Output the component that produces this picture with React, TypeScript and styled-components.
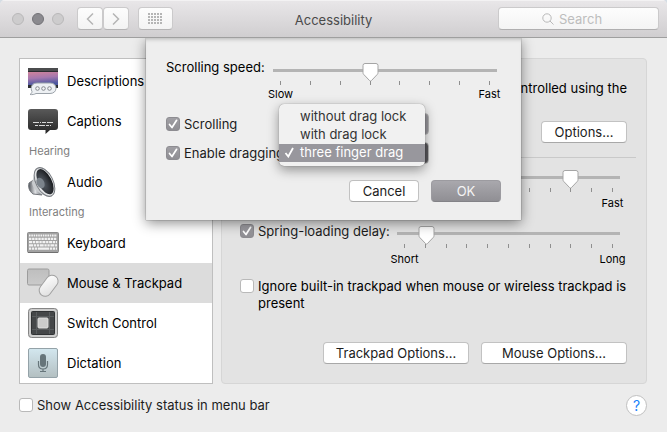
import React from "react";
import styled, { createGlobalStyle, css } from "styled-components";

const GlobalStyle = createGlobalStyle`
  *, *::before, *::after { box-sizing: border-box; }
  body { margin: 0; background: #d5dde4; }
  body, button, input, select { font-family: Inter, "Open Sans", sans-serif; font-size: 13px; color: #1c1c1c; }
  button { cursor: default; }
`;

const svgUrl = (body: string) => `url("data:image/svg+xml,${encodeURIComponent(body)}")`;

const thumbImage = svgUrl(
  `<svg xmlns="http://www.w3.org/2000/svg" width="17" height="20"><path d="M3 1.5h11a2 2 0 0 1 2 2v7.2c0 .7-.3 1.200-.7 1.700L9.400 18.600a1.200 1.200 0 0 1-1.800 0L1.700 12.400C1.300 11.900 1 11.400 1 10.700V3.500a2 2 0 0 1 2-2z" fill="#fff" stroke="#a5a5a5"/></svg>`
);
const tickImage = svgUrl(
  `<svg xmlns="http://www.w3.org/2000/svg" width="14" height="14"><path d="M3.500 7.500l2.500 3L10.600 3.300" fill="none" stroke="#fff" stroke-width="1.700" stroke-linecap="round" stroke-linejoin="round"/></svg>`
);

const Window = styled.div`
  min-height: 100vh;
  display: flex;
  flex-direction: column;
  background: #ececec;
  border-radius: 5px 5px 0 0;
  overflow: hidden;
`;

const TitleBar = styled.header`
  height: 38px;
  flex: none;
  display: grid;
  grid-template-columns: 1fr auto 1fr;
  align-items: center;
  padding: 0 8px;
  background: linear-gradient(#e9e7e9, #d0ced0);
  border-bottom: 1px solid #9f9f9f;
  box-shadow: inset 0 1px #f3f2f3;
`;

const TitleGroup = styled.div`
  display: flex;
  align-items: center;
  gap: 9px;
  padding-left: 4px;
`;

const Lights = styled.div`
  display: flex;
  gap: 8px;
  margin-right: 4px;
`;

const Light = styled.button<{ $active?: boolean }>`
  width: 12px;
  height: 12px;
  padding: 0;
  border-radius: 50%;
  border: 1px solid ${(p) => (p.$active ? "#737277" : "#b9b8b9")};
  background: ${(p) => (p.$active ? "#8b8a8f" : "#cdcccd")};
`;

const NavPair = styled.div`
  display: flex;
`;

const ToolButton = styled.button<{ $wide?: boolean }>`
  width: ${(p) => (p.$wide ? 35 : 26)}px;
  height: 23px;
  padding: 0;
  display: grid;
  place-items: center;
  border: 1px solid #cbcacb;
  border-bottom-color: #b5b4b5;
  border-radius: 4px;
  background: linear-gradient(#fdfdfd, #f3f3f3);
  color: #b5b5b5;
`;

const Title = styled.h1`
  margin: 2px 0 0;
  font-size: 13px;
  line-height: 18px;
  font-weight: 400;
  color: #4a4a4a;
`;

const SearchBox = styled.label`
  justify-self: end;
  width: 161px;
  height: 23px;
  display: flex;
  align-items: center;
  justify-content: center;
  gap: 5px;
  border: 1px solid #cbcacb;
  border-bottom-color: #b0afb0;
  border-radius: 4px;
  background: linear-gradient(#fdfdfd, #f4f4f4);
  color: #b9b9b9;
`;

const SearchInput = styled.input`
  width: 56px;
  padding: 1px 0 0;
  border: 0;
  outline: 0;
  background: transparent;
  &::placeholder { color: #bdbdbd; }
`;

const Body = styled.main`
  position: relative;
  flex: 1;
  display: flex;
  flex-direction: column;
  padding: 20px 20px 16px 19px;
  overflow: hidden;
`;

const Columns = styled.div`
  display: flex;
  gap: 8px;
`;

const Sidebar = styled.nav`
  width: 194px;
  flex: none;
  padding-top: 2px;
  background: #fff;
  border: 1px solid #bfbfbf;
`;

const GroupTitle = styled.h2`
  margin: 0;
  padding-left: 9px;
  font-size: 11px;
  line-height: 21px;
  font-weight: 400;
  color: #808080;
`;

const Item = styled.a<{ $selected?: boolean }>`
  height: 40px;
  display: flex;
  align-items: center;
  gap: 9px;
  padding-left: 8px;
  color: #000;
  text-decoration: none;
  background: ${(p) => (p.$selected ? "#dcdcdc" : "transparent")};
`;

const ItemIcon = styled.span`
  width: 30px;
  flex: none;
  display: flex;
  justify-content: center;
  svg { flex: none; }
`;

const Panel = styled.section`
  flex: 1;
  min-width: 0;
  display: flex;
  flex-direction: column;
  padding: 21px 19px 19px 18px;
  background: #e3e3e3;
  border: 1px solid #d6d6d6;
  border-radius: 4px;
`;

const Intro = styled.p`
  margin: 0 0 7px;
  align-self: flex-end;
  line-height: 17px;
  white-space: nowrap;
  color: #000;
`;

const PushButton = styled.button<{ $primary?: boolean; $size: "small" | "medium" | "large" }>`
  width: ${(p) => ({ small: 70, medium: 86, large: 146 })[p.$size]}px;
  height: 22px;
  padding: 0;
  line-height: 18px;
  border: 1px solid #c2c2c2;
  border-bottom-color: #a8a8a8;
  border-radius: 4px;
  background: #fff;
  white-space: nowrap;
  ${(p) =>
    p.$primary &&
    css`
      color: #f4f4f4;
      border-color: #9c9ba0;
      border-bottom-color: #838287;
      background: linear-gradient(#a9a8ad, #908f94);
    `}
`;

const ButtonRow = styled.div`
  display: flex;
  justify-content: flex-end;
  gap: 12px;
`;

const PanelFooter = styled(ButtonRow)`
  margin-top: auto;
`;

const Divider = styled.hr`
  width: auto;
  margin: 14px -9px 9px;
  border: 0;
  border-top: 1px solid #c9c9c9;
`;

const SliderRows = styled.div`
  display: grid;
  grid-template-columns: 148px 1fr;
  gap: 13px 9px;
  padding-right: 7px;
  margin-bottom: 12px;
`;

const CheckLabel = styled.label`
  display: flex;
  align-items: flex-start;
  gap: 4px;
  line-height: 17px;
  white-space: nowrap;
`;

const WrapLabel = styled(CheckLabel)`
  white-space: normal;
  color: #000;
`;

const Check = styled.input`
  appearance: none;
  flex: none;
  width: 14px;
  height: 14px;
  margin: 1px 0;
  border: 1px solid #b9b9b9;
  border-radius: 3px;
  background: #fff;
  &:checked {
    border-color: #8d8c91;
    background: ${tickImage} center / 14px 14px no-repeat, linear-gradient(#a09fa4, #8f8e93);
  }
`;

const SliderBox = styled.div<{ $roomy?: boolean }>`
  flex: 1;
  min-width: 0;
  padding-top: ${(p) => (p.$roomy ? 2 : 0)}px;
`;

const Range = styled.input`
  appearance: none;
  display: block;
  width: 100%;
  height: 19px;
  margin: 0;
  background: transparent;
  &::-webkit-slider-runnable-track {
    height: 19px;
    background: linear-gradient(#b4b4b4, #b4b4b4) 0 7px / 100% 3px no-repeat;
  }
  &::-webkit-slider-thumb {
    appearance: none;
    width: 17px;
    height: 20px;
    background: ${thumbImage} no-repeat;
  }
`;

const Ticks = styled.div`
  display: flex;
  justify-content: space-between;
  padding: 0 7px;
`;

const Tick = styled.span`
  width: 1px;
  height: 4px;
  background: #8f8f8f;
`;

const Ends = styled.div<{ $roomy?: boolean }>`
  display: flex;
  justify-content: space-between;
  padding: ${(p) => (p.$roomy ? 4 : 2)}px 7px 0;
`;

const End = styled.span`
  width: 1px;
  display: flex;
  justify-content: center;
  white-space: nowrap;
  font-size: 11px;
  line-height: 14px;
  color: #000;
`;

const Footer = styled.footer`
  display: flex;
  align-items: center;
  justify-content: space-between;
  padding-top: 11px;
`;

const HelpButton = styled.button`
  width: 21px;
  height: 21px;
  padding: 0;
  border: 1px solid #c0c0c0;
  border-radius: 50%;
  background: #fff;
  color: #1a82fb;
  font-size: 14px;
  line-height: 18px;
`;

const Sheet = styled.section`
  position: absolute;
  top: 0;
  left: 0;
  right: 0;
  width: 375px;
  margin: 0 auto;
  padding: 21px 20px 18px;
  background: #eee;
  box-shadow: 0 0 1px rgba(0, 0, 0, 0.6), 0 3px 12px rgba(0, 0, 0, 0.45), inset 0 4px 4px -3px rgba(0, 0, 0, 0.25);
`;

const SpeedRow = styled.div`
  display: flex;
  gap: 9px;
  padding: 3px 4px 0 0;
  margin-bottom: 12px;
`;

const SpeedLabel = styled.label`
  width: 98px;
  line-height: 17px;
  margin-top: -3px;
  white-space: nowrap;
  color: #000;
`;

const OptionRow = styled.div`
  position: relative;
  display: grid;
  grid-template-columns: 115px 148px;
  align-items: center;
  height: 22px;
  margin-bottom: 7px;
`;

const Popup = styled.select<{ $dark?: boolean }>`
  appearance: none;
  height: 22px;
  padding: 0 8px;
  border: 1px solid #b5b5b5;
  border-radius: 4px;
  background: linear-gradient(90deg, #fff 85%, ${(p) => (p.$dark ? "#59585c" : "#98979c")} 85%);
`;

const Menu = styled.ul`
  position: absolute;
  z-index: 1;
  left: 113px;
  top: -38px;
  width: 146px;
  margin: 0;
  padding: 4px 0;
  list-style: none;
  background: #f1f1f1;
  border-radius: 5px;
  box-shadow: 0 0 1px rgba(0, 0, 0, 0.5), 0 4px 12px rgba(0, 0, 0, 0.4);
`;

const MenuItem = styled.li<{ $selected?: boolean }>`
  height: 18px;
  display: grid;
  grid-template-columns: 16px 1fr;
  align-items: center;
  padding: 0 0 2px 5px;
  line-height: 16px;
  white-space: nowrap;
  color: ${(p) => (p.$selected ? "#fff" : "#333")};
  background: ${(p) => (p.$selected ? "#98979d" : "transparent")};
`;

const SheetButtons = styled(ButtonRow)`
  margin-top: 16px;
`;

function DescriptionsIcon() {
  return (
    <svg width="30" height="30" viewBox="0 -1 30 30">
      <defs>
        <linearGradient id="sky" x1="0" y1="0" x2="0.2" y2="1">
          <stop offset="0" stopColor="#d0839b" />
          <stop offset="0.5" stopColor="#a678ae" />
          <stop offset="1" stopColor="#4c58a0" />
        </linearGradient>
      </defs>
      <path d="M0 1h30v20H0z" fill="#2a2c30" />
      <path d="M0 1h30v3H0z" fill="#4b4c4e" />
      <path d="M0 5h30v13H0z" fill="url(#sky)" />
      <path d="M9 16h13c3.600 0 6 2 6 5.200s-2.400 5.300-6 5.300H8c-1.700 1-3.700 1.300-6 1 1.300-.8 2-1.800 2-3-.6-1-.8-2-.8-3C3.200 18 5.500 16 9 16z" fill="#edf0f3" stroke="#9ba2a9" />
      <g fill="#f4f5f6" stroke="#85898e">
        <circle cx="9.500" cy="21.500" r="1.800" />
        <circle cx="15.500" cy="21.500" r="1.800" />
        <circle cx="21.500" cy="21.500" r="1.800" />
      </g>
    </svg>
  );
}

function CaptionsIcon() {
  return (
    <svg width="30" height="30" viewBox="0 -1 30 30">
      <defs>
        <linearGradient id="bubble" x1="0" y1="0" x2="0" y2="1">
          <stop offset="0" stopColor="#595959" />
          <stop offset="1" stopColor="#262626" />
        </linearGradient>
      </defs>
      <path d="M3 2h24a3 3 0 0 1 3 3v15a3 3 0 0 1-3 3h-5l-4.500 4V23H3a3 3 0 0 1-3-3V5a3 3 0 0 1 3-3z" fill="url(#bubble)" />
      <path d="M5 15.500h20" stroke="#d8d8d8" strokeDasharray="6 1 1 1 4 1" />
      <path d="M7 18.500h16" stroke="#d8d8d8" strokeDasharray="3 1 6 1" />
    </svg>
  );
}

function AudioIcon() {
  return (
    <svg width="30" height="30" viewBox="0 0 30 30">
      <defs>
        <linearGradient id="magnet" x1="0" y1="0" x2="1" y2="0">
          <stop offset="0" stopColor="#50545a" />
          <stop offset="0.5" stopColor="#dfe1e4" />
          <stop offset="1" stopColor="#666a70" />
        </linearGradient>
        <radialGradient id="cone" cx="0.3" cy="0.5" r="0.7">
          <stop offset="0" stopColor="#596069" />
          <stop offset="1" stopColor="#17191c" />
        </radialGradient>
      </defs>
      <path d="M7 12L1 16c-1 4 0 8 4 11l9 1z" fill="url(#magnet)" stroke="#73777c" />
      <path d="M7 3L4 16c1 5 4 8 9 11l11 3z" fill="#c8cbce" />
      <ellipse cx="16.500" cy="15" rx="8.500" ry="15.500" transform="rotate(-27 16.500 15)" fill="#e1e3e5" stroke="#777b80" />
      <ellipse cx="17" cy="14.700" rx="6.700" ry="13.700" transform="rotate(-27 17 14.700)" fill="url(#cone)" />
      <ellipse cx="12.500" cy="16" rx="3.800" ry="5.500" transform="rotate(-27 12.500 16)" fill="#7b838b" />
    </svg>
  );
}

function KeyboardIcon() {
  return (
    <svg width="32" height="30" viewBox="0 0 32 30">
      <rect x="0.500" y="4.500" width="31" height="20" rx="1" fill="#a2a2a2" stroke="#8c8c8c" />
      <path d="M1 24.500h30" stroke="#707070" />
      <g stroke="#f2f2f2" strokeWidth="2.200">
        <path d="M2 7.500h28" strokeDasharray="1.600 .7" />
        <path d="M2 10.800h28" strokeDasharray="2.400 .7" />
        <path d="M2 14.100h28" strokeDasharray="3 .7 2.300 .7" />
        <path d="M2 17.400h28" strokeDasharray="4 .7 2.300 .7 2.300 .7" />
        <path d="M2 20.700h28" strokeDasharray="2.300 .7 2.300 .7 2.300 .7 11 .7" />
      </g>
    </svg>
  );
}

function MouseIcon() {
  return (
    <svg width="32" height="32" viewBox="0 0 32 32">
      <defs>
        <linearGradient id="pad" x1="0" y1="0" x2="0" y2="1">
          <stop offset="0" stopColor="#bebebe" />
          <stop offset="1" stopColor="#cacaca" />
        </linearGradient>
        <linearGradient id="shell" x1="0" y1="0" x2="1" y2="1">
          <stop offset="0" stopColor="#fff" />
          <stop offset="1" stopColor="#dedede" />
        </linearGradient>
      </defs>
      <rect x="0.500" y="2" width="21.500" height="16" rx="1.500" fill="url(#pad)" stroke="#9c9c9c" />
      <rect x="15.800" y="7" width="12" height="23.500" rx="6" transform="rotate(37 21.700 18.500)" fill="url(#shell)" stroke="#a0a0a0" />
    </svg>
  );
}

function SwitchIcon() {
  return (
    <svg width="30" height="30" viewBox="0 0 30 30">
      <rect x="0.500" y="0.500" width="29" height="29" rx="3" fill="#c4c4c4" stroke="#858585" />
      <rect x="2" y="2" width="26" height="26" rx="2" fill="none" stroke="#d6d6d6" />
      <rect x="3.500" y="3.500" width="23" height="23" rx="1" fill="#454749" stroke="#303234" />
      <path d="M8.500 4v22M21.500 4v22M4 8.500h22M4 21.500h22" stroke="#595c5e" />
      <rect x="10" y="10" width="10" height="10" rx="1" fill="#cbcbcb" stroke="#dedede" />
    </svg>
  );
}

function DictationIcon() {
  return (
    <svg width="30" height="30" viewBox="0 0 30 30">
      <defs>
        <linearGradient id="tile" x1="0" y1="0" x2="0" y2="1">
          <stop offset="0" stopColor="#d3e7ef" />
          <stop offset="1" stopColor="#b3bfc1" />
        </linearGradient>
      </defs>
      <rect x="0.500" y="0.500" width="29" height="29" rx="1.500" fill="url(#tile)" stroke="#94a2a8" />
      <rect x="12" y="6" width="6" height="13" rx="3" fill="#66757a" />
      <path d="M10.500 13v3.500c0 6 9 6 9 0V13M15 21v2.500M12 23.500h6" fill="none" stroke="#66757a" strokeWidth="1.200" />
    </svg>
  );
}

interface SliderProps {
  id?: string;
  label?: string;
  count: number;
  value: number;
  low: string;
  high: string;
  roomy?: boolean;
}

function Slider({ id, label, count, value, low, high, roomy }: SliderProps) {
  return (
    <SliderBox $roomy={roomy}>
      <Range id={id} aria-label={label} type="range" min={0} max={count - 1} defaultValue={value} />
      <Ticks>
        {Array.from({ length: count }, (_, i) => (
          <Tick key={i} />
        ))}
      </Ticks>
      <Ends $roomy={roomy}>
        <End>{low}</End>
        <End>{high}</End>
      </Ends>
    </SliderBox>
  );
}

const dragModes = ["without drag lock", "with drag lock", "three finger drag"];

export default function App() {
  return (
    <>
      <GlobalStyle />
      <Window>
        <TitleBar>
          <TitleGroup>
            <Lights>
              <Light aria-label="Close" />
              <Light aria-label="Minimize" $active />
              <Light aria-label="Zoom" />
            </Lights>
            <NavPair>
              <ToolButton aria-label="Back">
                <svg width="8" height="14" viewBox="0 0 8 14" fill="none" stroke="currentColor" strokeWidth="1.500">
                  <path d="M7 1.500L1.500 7 7 12.500" />
                </svg>
              </ToolButton>
              <ToolButton aria-label="Forward">
                <svg width="8" height="14" viewBox="0 0 8 14" fill="none" stroke="currentColor" strokeWidth="1.500">
                  <path d="M1 1.500L6.500 7 1 12.500" />
                </svg>
              </ToolButton>
            </NavPair>
            <ToolButton aria-label="Show all" $wide>
              <svg width="15" height="11" viewBox="0 0 15 11" fill="currentColor">
                {[0, 3, 6, 9].map((y) =>
                  [0, 3, 6, 9, 12].map((x) => <rect key={`${x}-${y}`} x={x} y={y} width="2" height="2" />)
                )}
              </svg>
            </ToolButton>
          </TitleGroup>
          <Title>Accessibility</Title>
          <SearchBox>
            <svg width="12" height="12" viewBox="0 0 12 12" fill="none" stroke="currentColor">
              <circle cx="5" cy="5" r="4.200" />
              <path d="M8 8l3.500 3.500" />
            </svg>
            <SearchInput type="search" aria-label="Search" placeholder="Search" />
          </SearchBox>
        </TitleBar>

        <Body>
          <Columns>
            <Sidebar aria-label="Accessibility features">
              <Item href="#descriptions"><ItemIcon><DescriptionsIcon /></ItemIcon>Descriptions</Item>
              <Item href="#captions"><ItemIcon><CaptionsIcon /></ItemIcon>Captions</Item>
              <GroupTitle>Hearing</GroupTitle>
              <Item href="#audio"><ItemIcon><AudioIcon /></ItemIcon>Audio</Item>
              <GroupTitle>Interacting</GroupTitle>
              <Item href="#keyboard"><ItemIcon><KeyboardIcon /></ItemIcon>Keyboard</Item>
              <Item href="#mouse" $selected aria-current="page">
                <ItemIcon><MouseIcon /></ItemIcon>Mouse &amp; Trackpad
              </Item>
              <Item href="#switch"><ItemIcon><SwitchIcon /></ItemIcon>Switch Control</Item>
              <Item href="#dictation"><ItemIcon><DictationIcon /></ItemIcon>Dictation</Item>
            </Sidebar>

            <Panel>
              <Intro>
                The mouse pointer can be controlled using the
                <br />
                keyboard.
              </Intro>
              <ButtonRow>
                <PushButton $size="medium">Options…</PushButton>
              </ButtonRow>
              <Divider />
              <SliderRows>
                <CheckLabel htmlFor="click-speed">Double-click speed:</CheckLabel>
                <Slider id="click-speed" count={11} value={8} low="Slow" high="Fast" roomy />
                <CheckLabel>
                  <Check type="checkbox" defaultChecked />
                  Spring-loading delay:
                </CheckLabel>
                <Slider label="Spring-loading delay" count={11} value={1} low="Short" high="Long" roomy />
              </SliderRows>
              <WrapLabel>
                <Check type="checkbox" />
                Ignore built-in trackpad when mouse or wireless trackpad is present
              </WrapLabel>
              <PanelFooter>
                <PushButton $size="large">Trackpad Options…</PushButton>
                <PushButton $size="large">Mouse Options…</PushButton>
              </PanelFooter>
            </Panel>
          </Columns>

          <Footer>
            <CheckLabel>
              <Check type="checkbox" />
              Show Accessibility status in menu bar
            </CheckLabel>
            <HelpButton aria-label="Help">?</HelpButton>
          </Footer>

          <Sheet role="dialog" aria-label="Trackpad options">
            <SpeedRow>
              <SpeedLabel htmlFor="scroll-speed">Scrolling speed:</SpeedLabel>
              <Slider id="scroll-speed" count={8} value={3} low="Slow" high="Fast" />
            </SpeedRow>
            <OptionRow>
              <CheckLabel>
                <Check type="checkbox" defaultChecked />
                Scrolling
              </CheckLabel>
              <Popup aria-label="Scrolling mode" />
            </OptionRow>
            <OptionRow>
              <CheckLabel>
                <Check type="checkbox" defaultChecked />
                Enable dragging
              </CheckLabel>
              <Popup $dark aria-label="Dragging mode" />
              <Menu role="listbox" aria-label="Dragging mode">
                {dragModes.map((mode, i) => (
                  <MenuItem key={mode} role="option" aria-selected={i === 2} $selected={i === 2}>
                    <svg width="11" height="11" viewBox="0 0 11 11" fill="none" stroke="currentColor" strokeWidth="1.800">
                      {i === 2 && <path d="M1.500 6l2.800 3.500L9 1" />}
                    </svg>
                    {mode}
                  </MenuItem>
                ))}
              </Menu>
            </OptionRow>
            <SheetButtons>
              <PushButton $size="small">Cancel</PushButton>
              <PushButton $size="small" $primary>OK</PushButton>
            </SheetButtons>
          </Sheet>
        </Body>
      </Window>
    </>
  );
}
